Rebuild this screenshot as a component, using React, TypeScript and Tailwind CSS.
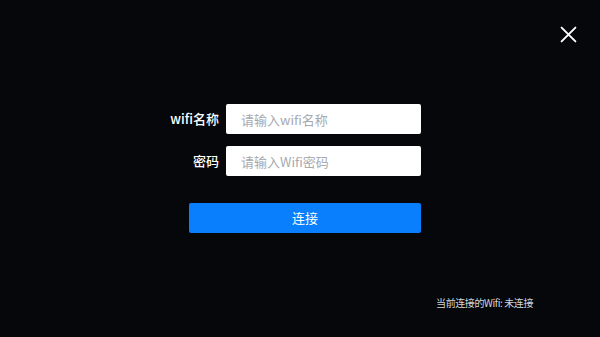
import React, { useState } from "react";

const font = { fontFamily: '"Noto Sans CJK SC", "Noto Sans", sans-serif' };

const App: React.FC = () => {
  const [name, setName] = useState("");
  const [pwd, setPwd] = useState("");

  return (
    <div
      className="w-[600px] h-[337px] bg-[#05070b] flex flex-col text-white overflow-hidden"
      style={font}
    >
      {/* header */}
      <div className="h-[60px] flex justify-end items-start pt-[25px] pr-[23px]">
        <button className="w-[18px] h-[18px] flex items-center justify-center">
          <svg width="17" height="17" viewBox="0 0 16 16" fill="none">
            <path d="M1.5 1.5L14.5 14.5M14.5 1.5L1.5 14.5" stroke="#fff" strokeWidth="1.8" strokeLinecap="round" />
          </svg>
        </button>
      </div>

      {/* form */}
      <div className="flex-1 flex items-center justify-center pl-[10px]">
        <div className="w-[232px] flex flex-col">
          <div className="flex items-center justify-end gap-[7px]">
            <label className="text-[13px] font-medium whitespace-nowrap">wifi名称</label>
            <input
              value={name}
              onChange={(e) => setName(e.target.value)}
              placeholder="请输入wifi名称"
              className="shrink-0 w-[195px] h-[30px] bg-white rounded-[2px] pl-[15px] text-[13px] text-gray-800 placeholder:text-[#a6a9b0] outline-none"
              style={font}
            />
          </div>
          <div className="flex items-center justify-end gap-[7px] mt-[12px]">
            <label className="text-[13px] font-medium whitespace-nowrap">密码</label>
            <input
              type="password"
              value={pwd}
              onChange={(e) => setPwd(e.target.value)}
              placeholder="请输入Wifi密码"
              className="shrink-0 w-[195px] h-[30px] bg-white rounded-[2px] pl-[15px] text-[13px] text-gray-800 placeholder:text-[#a6a9b0] outline-none"
              style={font}
            />
          </div>
          <button className="mt-[27px] h-[30px] w-full bg-[#0a7ffd] rounded-[2px] text-[13px] text-white">
            连接
          </button>
        </div>
      </div>

      {/* footer */}
      <div className="h-[60px] flex justify-end items-start pt-[18px] pr-[67px]">
        <span className="text-[10px] tracking-[-0.4px] text-[#d4d6da]">当前连接的Wifi: 未连接</span>
      </div>
    </div>
  );
};

export default App;
